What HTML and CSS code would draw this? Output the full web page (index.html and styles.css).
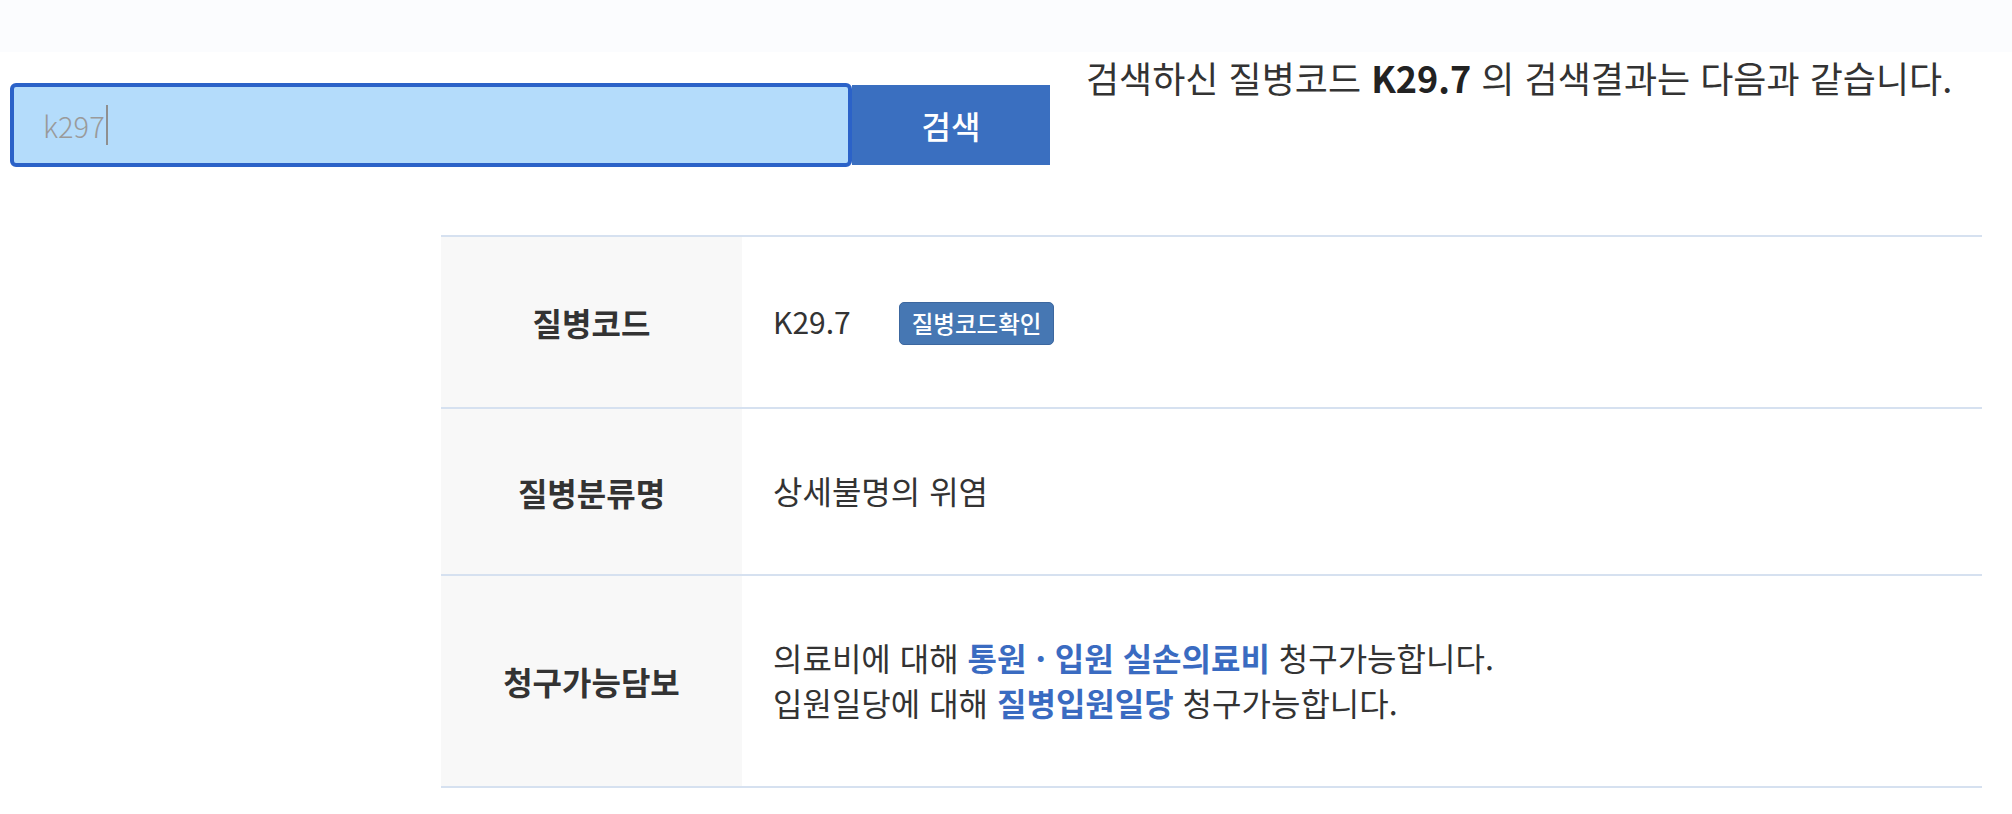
FILE: index.html
```html
<!DOCTYPE html>
<html lang="ko">
<head>
<meta charset="utf-8">
<title>질병코드 검색</title>
<link rel="stylesheet" href="styles.css">
</head>
<body>
<div class="band"></div>
<div class="search-row">
  <form class="search-form" onsubmit="return false;">
    <div class="search-input"><span class="typed">k297</span><span class="caret"></span></div>
    <button type="submit" class="search-btn">검색</button>
  </form>
  <p class="result-title">검색하신 질병코드 <strong>K29.7</strong> 의 검색결과는 다음과 같습니다.</p>
</div>

<div class="result-table">
  <div class="row">
    <div class="label">질병코드</div>
    <div class="value">
      <div class="code-line">
        <span class="code">K29.7</span>
        <button type="button" class="check-btn">질병코드확인</button>
      </div>
    </div>
  </div>
  <div class="row">
    <div class="label">질병분류명</div>
    <div class="value">상세불명의 위염</div>
  </div>
  <div class="row">
    <div class="label">청구가능담보</div>
    <div class="value">
      <p class="line">의료비에 대해 <b class="hl">통원 · 입원 실손의료비</b> 청구가능합니다.</p>
      <p class="line">입원일당에 대해 <b class="hl">질병입원일당</b> 청구가능합니다.</p>
    </div>
  </div>
</div>
</body>
</html>
```

FILE: styles.css
```css
* { box-sizing: border-box; }

body {
  margin: 0;
  background: #ffffff;
  font-family: "Noto Sans CJK KR", "Noto Sans", sans-serif;
  color: #333333;
}

.band {
  height: 52px;
  background: #fbfcfe;
}

.search-row {
  display: flex;
  align-items: flex-start;
  padding-left: 10px;
}

.search-form {
  display: flex;
  align-items: flex-start;
  margin: 31px 0 0 0;
}

.search-input {
  width: 842px;
  height: 84px;
  border: 4px solid #2b62c8;
  border-radius: 6px;
  background: #b4dcfb;
  display: flex;
  align-items: center;
  padding-left: 29px;
  font-size: 29px;
  font-weight: 300;
  color: #9a9a9a;
}

.caret {
  display: inline-block;
  width: 2px;
  height: 40px;
  background: #8f8f8f;
  margin-left: 1px;
}

.search-btn {
  width: 198px;
  height: 80px;
  margin-top: 2px;
  border: 0;
  background: #3a6fc0;
  color: #ffffff;
  font-family: inherit;
  font-size: 32px;
  font-weight: 500;
  padding: 0;
}

.result-title {
  margin: 0 0 0 36px;
  font-size: 36px;
  line-height: 50px;
  color: #333333;
}

.result-title strong {
  font-weight: 700;
  color: #222222;
}

.result-table {
  margin: 68px 0 0 441px;
  width: 1541px;
  border-top: 2px solid #d6e1f0;
}

.row {
  display: flex;
  border-bottom: 2px solid #d6e1f0;
}

.label {
  flex: 0 0 301px;
  background: #f8f8f8;
  display: flex;
  align-items: center;
  justify-content: center;
  font-size: 32px;
  font-weight: 700;
  color: #333333;
}

.value {
  flex: 1;
  padding: 59px 30px 61px 31px;
  font-size: 32px;
  line-height: 45px;
  color: #333333;
}

.code-line {
  display: flex;
  align-items: center;
  height: 50px;
  gap: 48px;
}

.code {
  font-size: 30px;
}

.check-btn {
  height: 43px;
  margin-top: 5px;
  padding: 0 12px;
  border: 1px solid #3c679f;
  border-radius: 5px;
  background: #4677b3;
  color: #ffffff;
  font-family: inherit;
  font-size: 23.5px;
  font-weight: 500;
  line-height: 1;
}

.line {
  margin: 0;
}

.hl {
  color: #3a6bc1;
  font-weight: 700;
}
```
